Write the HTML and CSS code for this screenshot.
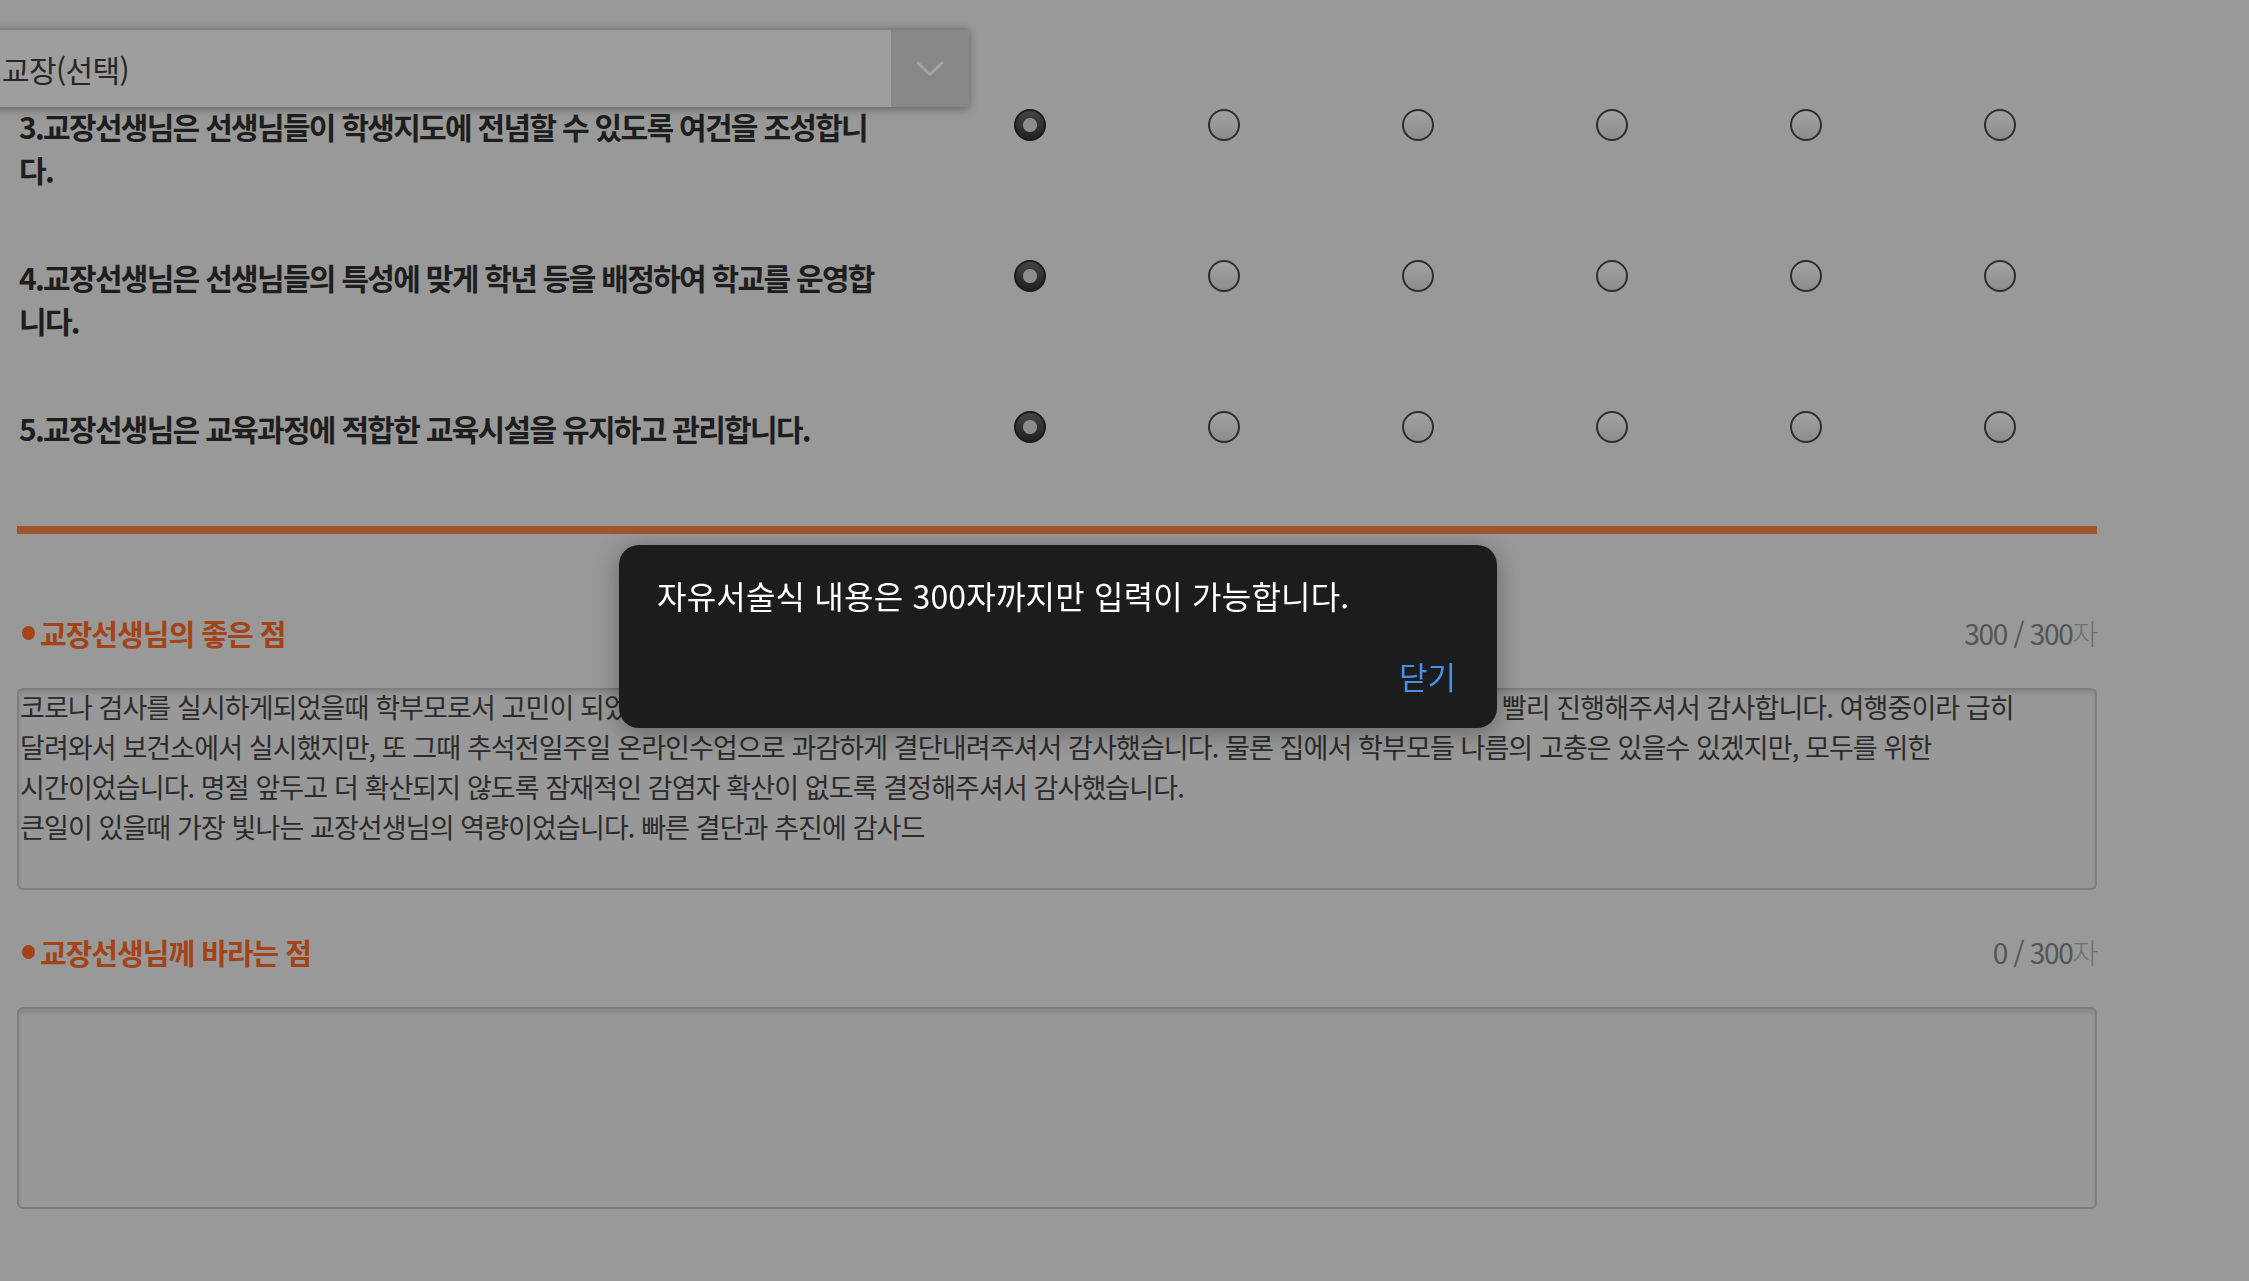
FILE: index.html
```html
<!DOCTYPE html>
<html lang="ko">
<head>
<meta charset="utf-8">
<title>교장선생님 평가</title>
<link rel="stylesheet" href="styles.css">
</head>
<body>
<div class="page">
  <div class="survey">
    <div class="q-list">
      <div class="q-row">
        <p class="q-text">3.교장선생님은 선생님들이 학생지도에 전념할 수 있도록 여건을 조성합니<br>다.</p>
        <div class="q-options">
          <span class="opt"><span class="radio checked"></span></span>
          <span class="opt"><span class="radio"></span></span>
          <span class="opt"><span class="radio"></span></span>
          <span class="opt"><span class="radio"></span></span>
          <span class="opt"><span class="radio"></span></span>
          <span class="opt"><span class="radio"></span></span>
        </div>
      </div>
      <div class="q-row">
        <p class="q-text">4.교장선생님은 선생님들의 특성에 맞게 학년 등을 배정하여 학교를 운영합<br>니다.</p>
        <div class="q-options">
          <span class="opt"><span class="radio checked"></span></span>
          <span class="opt"><span class="radio"></span></span>
          <span class="opt"><span class="radio"></span></span>
          <span class="opt"><span class="radio"></span></span>
          <span class="opt"><span class="radio"></span></span>
          <span class="opt"><span class="radio"></span></span>
        </div>
      </div>
      <div class="q-row">
        <p class="q-text">5.교장선생님은 교육과정에 적합한 교육시설을 유지하고 관리합니다.</p>
        <div class="q-options">
          <span class="opt"><span class="radio checked"></span></span>
          <span class="opt"><span class="radio"></span></span>
          <span class="opt"><span class="radio"></span></span>
          <span class="opt"><span class="radio"></span></span>
          <span class="opt"><span class="radio"></span></span>
          <span class="opt"><span class="radio"></span></span>
        </div>
      </div>
    </div>

    <div class="divider"></div>

    <section class="free">
      <div class="free-head">
        <h3 class="free-title">교장선생님의 좋은 점</h3>
        <span class="count"><span class="num">300 / 300</span><span class="unit">자</span></span>
      </div>
      <div class="textbox"><div class="textbox-content">코로나 검사를 실시하게되었을때 학부모로서 고민이 되었는데, 교장선생님께서 신속하게 결정해주시고 학교에서 선별진료소 검사를 최대한 빨리 진행해주셔서 감사합니다. 여행중이라 급히<br>달려와서 보건소에서 실시했지만, 또 그때 추석전일주일 온라인수업으로 과감하게 결단내려주셔서 감사했습니다. 물론 집에서 학부모들 나름의 고충은 있을수 있겠지만, 모두를 위한<br>시간이었습니다. 명절 앞두고 더 확산되지 않도록 잠재적인 감염자 확산이 없도록 결정해주셔서 감사했습니다.<br>큰일이 있을때 가장 빛나는 교장선생님의 역량이었습니다. 빠른 결단과 추진에 감사드</div></div>
    </section>

    <section class="free">
      <div class="free-head">
        <h3 class="free-title">교장선생님께 바라는 점</h3>
        <span class="count"><span class="num">0 / 300</span><span class="unit">자</span></span>
      </div>
      <div class="textbox"><div class="textbox-content"></div></div>
    </section>
  </div>

  <div class="select-bar">
    <span class="select-label">교장(선택)</span>
    <span class="select-btn">
      <svg class="chevron" width="28" height="16" viewBox="0 0 28 16"><polyline points="2,2 14,13.5 26,2" fill="none" stroke="#ffffff" stroke-width="3" stroke-linecap="round" stroke-linejoin="round"/></svg>
    </span>
  </div>
</div>

<div class="backdrop"></div>

<div class="dialog" role="alertdialog">
  <p class="dialog-msg">자유서술식 내용은 300자까지만 입력이 가능합니다.</p>
  <div class="dialog-actions">
    <button class="dialog-btn" type="button">닫기</button>
  </div>
</div>
</body>
</html>
```

FILE: styles.css
```css
* {
  box-sizing: border-box;
}

html,
body {
  margin: 0;
  padding: 0;
}

body {
  width: 2249px;
  height: 1281px;
  overflow: hidden;
  position: relative;
  background: #efefef;
  font-family: "Noto Sans CJK KR", "Noto Sans", sans-serif;
}

.page {
  position: relative;
  height: 100%;
}

.survey {
  width: 2080px;
  margin-left: 17px;
  padding-top: 77px;
}

/* question rows */
.q-row {
  display: flex;
  align-items: flex-start;
  padding: 31px 0 34px;
}

.q-text {
  width: 916px;
  margin: -3px 0 3px;
  padding-left: 2px;
  font-size: 30px;
  line-height: 43px;
  font-weight: 700;
  letter-spacing: -1.7px;
  color: #303030;
  white-space: nowrap;
}

.q-options {
  display: grid;
  grid-template-columns: repeat(6, 194px);
  padding-top: 1px;
}

.opt {
  display: flex;
  justify-content: center;
}

.radio {
  width: 32px;
  height: 32px;
  border-radius: 50%;
  border: 2px solid #484848;
  background: linear-gradient(#fdfdfd, #dcdcdc);
}

.radio.checked {
  border-color: #2a2a2a;
  background:
    radial-gradient(circle at 50% 50%, #dcdcdc 0 6.5px, #9a9a9a 7px, transparent 7.5px),
    linear-gradient(#6c6c6c, #333333);
}

.divider {
  height: 8px;
  margin-top: 39px;
  background: #fa894b;
}

/* free text sections */
.free {
  margin-top: 42px;
}

.divider + .free {
  margin-top: 79px;
}

.free-head {
  display: flex;
  justify-content: space-between;
  align-items: center;
  margin-bottom: 35px;
}

.free-title {
  display: flex;
  align-items: center;
  margin: 0;
  padding-left: 5px;
  font-size: 29px;
  line-height: 40px;
  font-weight: 700;
  letter-spacing: -1px;
  color: #ff6a24;
}

.free-title::before {
  content: "";
  width: 13px;
  height: 14px;
  margin-right: 5px;
  border-radius: 50%;
  background: currentColor;
}

.count {
  font-size: 28px;
  line-height: 40px;
  letter-spacing: -1.3px;
}

.count .num {
  color: #858585;
}

.count .unit {
  color: #b0b0b0;
  font-weight: 300;
}

.textbox {
  height: 202px;
  padding: 0 1px;
  border: 2px solid #c6c6c6;
  border-radius: 6px;
  background: #eeeeee;
  box-shadow: inset 0 3px 4px rgba(0, 0, 0, 0.12);
  overflow: hidden;
}

.textbox-content {
  margin-top: -3px;
  font-size: 27px;
  line-height: 40px;
  letter-spacing: -0.9px;
  color: #444444;
  white-space: nowrap;
}

/* floating select header */
.select-bar {
  position: absolute;
  top: 28px;
  left: -12px;
  z-index: 1;
  width: 981px;
  height: 79px;
  display: flex;
  background: #f8f8f8;
  border-top: 2px solid #cacaca;
  border-radius: 0 4px 4px 0;
  box-shadow: 0 2px 8px rgba(0, 0, 0, 0.35);
}

.select-label {
  flex: 1;
  display: flex;
  align-items: center;
  padding-left: 14px;
  font-size: 30px;
  letter-spacing: -0.6px;
  color: #3c3c3c;
}

.select-btn {
  width: 78px;
  display: flex;
  align-items: center;
  justify-content: center;
  background: #d4d4d4;
  border-radius: 0 4px 4px 0;
}

/* modal */
.backdrop {
  position: fixed;
  inset: 0;
  z-index: 2;
  background: rgba(0, 0, 0, 0.36);
}

.dialog {
  position: absolute;
  left: 619px;
  top: 545px;
  z-index: 3;
  width: 878px;
  height: 183px;
  display: flex;
  flex-direction: column;
  padding: 30px 41px 32px 38px;
  background: #1c1c1e;
  border-radius: 20px;
  box-shadow: 0 4px 24px rgba(0, 0, 0, 0.35);
}

.dialog-msg {
  margin: 0;
  font-size: 32px;
  line-height: 40px;
  letter-spacing: 0.2px;
  color: #ffffff;
}

.dialog-actions {
  display: flex;
  justify-content: flex-end;
  margin-top: 41px;
}

.dialog-btn {
  padding: 0;
  border: 0;
  background: none;
  font-family: inherit;
  font-size: 31px;
  line-height: 40px;
  color: #4a90e2;
  cursor: pointer;
}
```
